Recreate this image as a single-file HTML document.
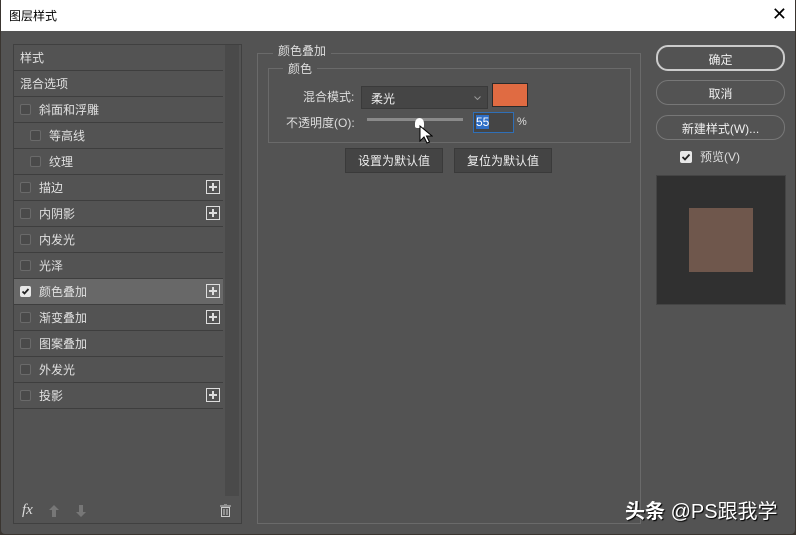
<!DOCTYPE html>
<html><head><meta charset="utf-8"><style>
*{box-sizing:border-box;margin:0;padding:0}
body{width:796px;height:535px;background:#3a3530;font-family:"Liberation Sans","Noto Sans CJK SC",sans-serif;font-size:12px;color:#ddd;position:relative;overflow:hidden}
.dlg{position:absolute;left:1px;top:0;width:794px;height:534px;background:#535353;border-radius:0 0 4px 4px}
.title{position:absolute;left:0;top:0;width:794px;height:31px;background:#fff;color:#000;font-size:12px;padding:7px 0 0 8px}
.close{position:absolute;right:8px;top:4px;font-size:18px;color:#000}
.a{position:absolute}
.lp{left:12px;top:44px;width:229px;height:480px;border:1px solid #404040}
.row{position:absolute;left:13px;width:209px;height:26px;border-bottom:1px solid #3e3e3e;padding:4px 0 0 6px;font-size:12px;color:#e0e0e0}
.cb{display:inline-block;width:11px;height:11px;border:1px solid #6a6a6a;background:#4a4a4a;border-radius:2px;vertical-align:-1px;margin-right:8px}
.plus{position:absolute;right:3px;top:5px;width:14px;height:14px}
.btn{position:absolute;border:1px solid #9a9a9a;border-radius:12px;text-align:center;color:#eee;font-size:12px}
.sb{position:absolute;background:#444;border:1px solid #3a3a3a;text-align:center;color:#eee;padding-top:3px}
</style></head><body>
<div class="dlg">
<div class="title">图层样式<span class="close">✕</span></div>
<div class="a lp"></div>
<div class="a" style="left:224px;top:45px;width:14px;height:451px;background:#4a4a4a"></div>
<div class="row" style="top:45px">样式</div>
<div class="row" style="top:71px">混合选项</div>
<div class="row" style="top:97px"><span class="cb"></span>斜面和浮雕</div>
<div class="row" style="top:123px;padding-left:16px"><span class="cb"></span>等高线</div>
<div class="row" style="top:149px;padding-left:16px"><span class="cb"></span>纹理</div>
<div class="row" style="top:175px"><span class="cb"></span>描边<svg class="plus" viewBox="0 0 14 14"><rect x="0.5" y="0.5" width="13" height="13" fill="none" stroke="#ddd"/><path d="M7 3v8M3 7h8" stroke="#ddd" stroke-width="2"/></svg></div>
<div class="row" style="top:201px"><span class="cb"></span>内阴影<svg class="plus" viewBox="0 0 14 14"><rect x="0.5" y="0.5" width="13" height="13" fill="none" stroke="#ddd"/><path d="M7 3v8M3 7h8" stroke="#ddd" stroke-width="2"/></svg></div>
<div class="row" style="top:227px"><span class="cb"></span>内发光</div>
<div class="row" style="top:253px"><span class="cb"></span>光泽</div>
<div class="row" style="top:279px;background:#686868"><span class="cb" style="background:#e8e8e8;border-color:#e8e8e8;position:relative"><svg style="position:absolute;left:0;top:0" width="9" height="9" viewBox="0 0 9 9"><path d="M1.5 4.5l2 2 4-4.5" stroke="#222" stroke-width="1.8" fill="none"/></svg></span>颜色叠加<svg class="plus" viewBox="0 0 14 14"><rect x="0.5" y="0.5" width="13" height="13" fill="none" stroke="#ddd"/><path d="M7 3v8M3 7h8" stroke="#ddd" stroke-width="2"/></svg></div>
<div class="row" style="top:305px"><span class="cb"></span>渐变叠加<svg class="plus" viewBox="0 0 14 14"><rect x="0.5" y="0.5" width="13" height="13" fill="none" stroke="#ddd"/><path d="M7 3v8M3 7h8" stroke="#ddd" stroke-width="2"/></svg></div>
<div class="row" style="top:331px"><span class="cb"></span>图案叠加</div>
<div class="row" style="top:357px"><span class="cb"></span>外发光</div>
<div class="row" style="top:383px"><span class="cb"></span>投影<svg class="plus" viewBox="0 0 14 14"><rect x="0.5" y="0.5" width="13" height="13" fill="none" stroke="#ddd"/><path d="M7 3v8M3 7h8" stroke="#ddd" stroke-width="2"/></svg></div>
<div class="a" style="left:21px;top:502px;font-style:italic;font-family:'Liberation Serif',serif;font-size:15px;color:#ddd">fx</div>
<svg class="a" style="left:48px;top:505px" width="10" height="12"><path d="M5 0L10 5H7v7H3V5H0z" fill="#777"/></svg>
<svg class="a" style="left:75px;top:505px" width="10" height="12"><path d="M5 12L10 7H7V0H3v7H0z" fill="#777"/></svg>
<svg class="a" style="left:219px;top:504px" width="11" height="13"><path d="M0 2h11M4 0h3M1.5 3.5h8v9h-8zM4 5v6M7 5v6" stroke="#ccc" fill="none"/></svg>

<div class="a" style="left:256px;top:53px;width:384px;height:471px;border:1px solid #6a6a6a"></div>
<div class="a" style="left:272px;top:42px;background:#535353;padding:0 5px;font-size:12px">颜色叠加</div>
<div class="a" style="left:267px;top:68px;width:363px;height:75px;border:1px solid #6a6a6a"></div>
<div class="a" style="left:282px;top:60px;background:#535353;padding:0 5px">颜色</div>
<div class="a" style="left:302px;top:88px">混合模式:</div>
<div class="a" style="left:360px;top:86px;width:127px;height:23px;background:#454545;border:1px solid #3a3a3a;padding:3px 0 0 9px;color:#eee">柔光<svg style="position:absolute;right:6px;top:9px" width="7" height="4"><path d="M0.5 0.5l3 3 3-3" stroke="#999" fill="none"/></svg></div>
<div class="a" style="left:491px;top:83px;width:36px;height:24px;background:#e06b42;border:1px solid #2a2a2a"></div>
<div class="a" style="left:285px;top:114px">不透明度(O):</div>
<div class="a" style="left:366px;top:118px;width:96px;height:3px;background:#8a8a8a"></div>
<div class="a" style="left:414px;top:118px;width:9px;height:10px;background:#fff;border-radius:50% 50% 2px 2px"></div>
<svg class="a" style="left:418px;top:125px" width="14" height="20"><path d="M1 1v15l4-4 3 6 2.5-1-3-6h5.5z" fill="#fff" stroke="#000" stroke-width="1"/></svg>
<div class="a" style="left:472px;top:112px;width:41px;height:21px;background:#454545;border:1px solid #2f6fb7;padding:2px"><span style="background:#2f6fc7;color:#fff">55</span></div>
<div class="a" style="left:516px;top:116px;font-size:11px">%</div>
<div class="sb" style="left:344px;top:148px;width:98px;height:25px">设置为默认值</div>
<div class="sb" style="left:453px;top:148px;width:98px;height:25px">复位为默认值</div>

<div class="btn" style="left:655px;top:45px;width:129px;height:26px;padding-top:4px;border-color:#ccc;border-width:2px">确定</div>
<div class="btn" style="left:655px;top:80px;width:129px;height:25px;padding-top:4px;border-color:#777">取消</div>
<div class="btn" style="left:655px;top:115px;width:129px;height:25px;padding-top:4px;border-color:#777">新建样式(W)...</div>
<div class="a" style="left:679px;top:151px;width:12px;height:12px;background:#e8e8e8;border-radius:2px"><svg width="12" height="12"><path d="M2.5 6l2.5 2.5 4.5-5" stroke="#222" stroke-width="1.8" fill="none"/></svg></div>
<div class="a" style="left:699px;top:148px">预览(V)</div>
<div class="a" style="left:655px;top:175px;width:130px;height:130px;background:#303030;border:1px solid #444"></div>
<div class="a" style="left:688px;top:208px;width:64px;height:64px;background:#6f574c"></div>
<div class="a" style="left:624px;top:495px;font-size:20px;color:#fff;text-shadow:1px 1px 1px #000;font-weight:bold;white-space:nowrap">头条 <span style="font-weight:normal">@PS跟我学</span></div>
</div>
</body></html>
